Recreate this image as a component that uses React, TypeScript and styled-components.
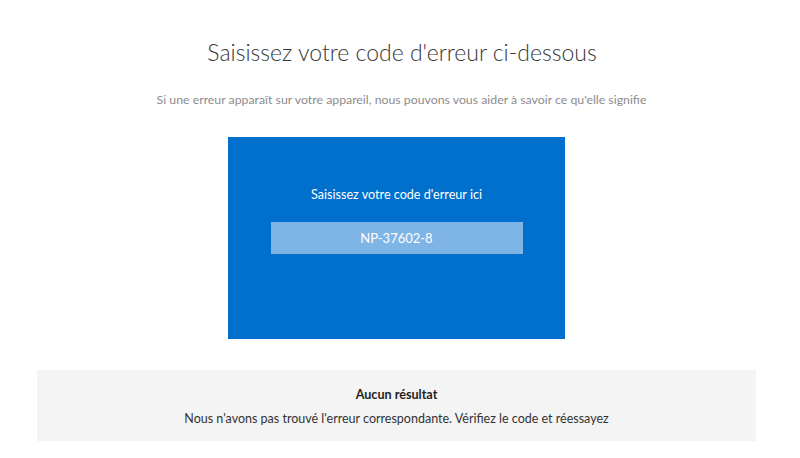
import React from "react";
import styled, { createGlobalStyle } from "styled-components";

const Global = createGlobalStyle`
  html, body { margin: 0; padding: 0; background: #ffffff; }
  body { font-family: Lato, "Open Sans", "Liberation Sans", sans-serif; }
`;

const Page = styled.main`
  width: 719px;
  margin-left: 37px;
  display: flex;
  flex-direction: column;
  align-items: center;
`;

const Title = styled.h1`
  margin: 36px 0 0;
  font-size: 23px;
  line-height: 32px;
  font-weight: 300;
  color: #363636;
  padding-left: 11px;
`;

const Subtitle = styled.p`
  margin: 24px 0 0;
  font-size: 12.3px;
  line-height: 16px;
  color: #8c8c8c;
  padding-left: 10px;
`;

const Card = styled.section`
  margin-top: 29px;
  width: 337px;
  height: 202px;
  box-sizing: border-box;
  background: #0070cc;
  display: flex;
  flex-direction: column;
  align-items: center;
  padding-top: 50px;
`;

const CardLabel = styled.label`
  font-size: 12.6px;
  line-height: 16px;
  color: #ffffff;
`;

const CodeInput = styled.div`
  margin-top: 19px;
  width: 252px;
  height: 32px;
  background: #7fb4e6;
  color: #ffffff;
  font-size: 13px;
  display: flex;
  align-items: center;
  justify-content: center;
`;

const Result = styled.section`
  margin-top: 31px;
  width: 719px;
  height: 71px;
  background: #f4f4f4;
  display: flex;
  flex-direction: column;
  align-items: center;
  padding-top: 17px;
  box-sizing: border-box;
`;

const ResultTitle = styled.h2`
  margin: 0;
  font-size: 12.6px;
  line-height: 16px;
  font-weight: 700;
  color: #1f1f1f;
`;

const ResultText = styled.p`
  margin: 8px 0 0;
  font-size: 12.5px;
  line-height: 16px;
  color: #333333;
`;

export default function App() {
  return (
    <>
      <Global />
      <Page>
        <Title>Saisissez votre code d'erreur ci-dessous</Title>
        <Subtitle>
          Si une erreur apparaît sur votre appareil, nous pouvons vous aider à savoir ce qu'elle signifie
        </Subtitle>
        <Card>
          <CardLabel>Saisissez votre code d'erreur ici</CardLabel>
          <CodeInput>NP-37602-8</CodeInput>
        </Card>
        <Result>
          <ResultTitle>Aucun résultat</ResultTitle>
          <ResultText>
            Nous n'avons pas trouvé l'erreur correspondante. Vérifiez le code et réessayez
          </ResultText>
        </Result>
      </Page>
    </>
  );
}
